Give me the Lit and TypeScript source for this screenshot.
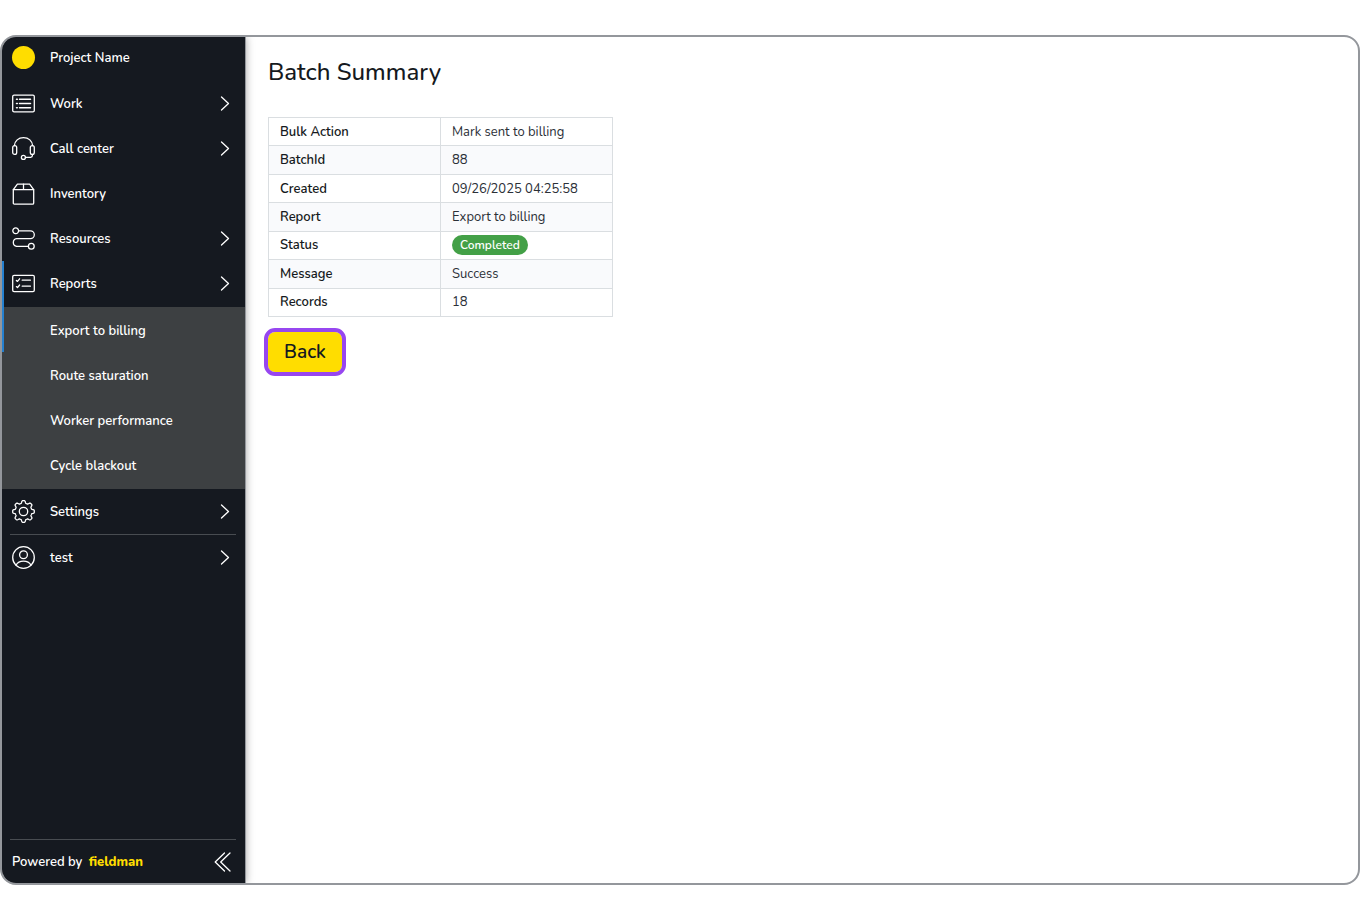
import { LitElement, html, svg, css, nothing, type TemplateResult } from "lit";
import { customElement, state } from "lit/decorators.js";

/* Outline of an eight-toothed gear with soft shoulders. */
function gearPath(cx: number, cy: number): string {
  const steps = 128;
  const points: string[] = [];
  for (let i = 0; i < steps; i++) {
    const a = (i / steps) * Math.PI * 2;
    const wave = Math.max(-1, Math.min(1, Math.cos(8 * a) * 1.9));
    const r = 9.6 + wave * 1.2;
    points.push(`${(cx + r * Math.sin(a)).toFixed(2)} ${(cy - r * Math.cos(a)).toFixed(2)}`);
  }
  return `M${points.join("L")}Z`;
}

const icons: Record<string, TemplateResult> = {
  work: svg`
    <rect x="0.7" y="3.2" width="21.6" height="16.6" rx="1.4" />
    <path d="M7.5 7.3H18.5M7.5 11.5H18.5M7.5 15.7H18.5" stroke-width="1.5" />
    <path d="M4.5 7.3H5.3M4.5 11.5H5.3M4.5 15.7H5.3" stroke-width="1.5" />`,
  call: svg`
    <rect x="0.7" y="8.6" width="4" height="8.8" rx="1.9" />
    <rect x="18.3" y="8.6" width="4" height="8.8" rx="1.9" />
    <path d="M2.4 8.6C2.7 4 6.4 0.6 11.5 0.6S20.3 4 20.6 8.6" />
    <path d="M20.4 17.4V18.6Q20.4 20.4 18.6 20.4H13.5" />
    <circle cx="11.4" cy="20.4" r="2" />`,
  inventory: svg`
    <path d="M1.3 7.6L5.4 2.2H17.6L21.7 7.6V21Q21.7 22.2 20.5 22.2H2.5Q1.3 22.2 1.3 21Z" />
    <path d="M1.3 7.6H21.7M11.5 2.2V7.6" />`,
  resources: svg`
    <circle cx="3.7" cy="3.8" r="2.9" />
    <circle cx="19.3" cy="19.3" r="2.9" />
    <path d="M6.6 3.8H18.4A3.9 3.9 0 0 1 18.4 11.6H4.6A3.9 3.9 0 0 0 4.6 19.3H16.4" />`,
  reports: svg`
    <rect x="0.7" y="3.3" width="21.6" height="16.4" rx="1.4" />
    <path d="M10.2 8.2H18.4M10.2 14.2H18.4M4.4 8.4L5.5 9.4L7.6 6.8M4.4 14.6L5.5 15.6L7.6 13" />`,
  settings: svg`
    <path d=${gearPath(11.5, 11.5)} />
    <circle cx="11.5" cy="11.5" r="4.2" />`,
  user: svg`
    <circle cx="11.5" cy="11.5" r="10.8" />
    <circle cx="11.5" cy="8.7" r="3.9" />
    <path d="M4 19.2C5.4 16.6 8.2 15.2 11.5 15.2S17.6 16.6 19 19.2" />`,
};

const icon = (name: string) => html`
  <svg class="icon" viewBox="0 0 23 23" aria-hidden="true">${icons[name]}</svg>
`;

const chevron = html`
  <svg class="chevron" viewBox="0 0 10 15" aria-hidden="true"><path d="M1.5 1L8.5 7.5L1.5 14" /></svg>
`;

@customElement("side-nav")
export class SideNav extends LitElement {
  @state() private reportsOpen = true;

  private reports = ["Export to billing", "Route saturation", "Worker performance", "Cycle blackout"];

  static styles = css`
    :host {
      display: flex;
      flex-direction: column;
      background: #151920;
      color: #ffffff;
      font-size: 13px;
      font-weight: 600;
      line-height: 20px;
    }
    nav {
      flex: 1;
    }
    ul {
      list-style: none;
      margin: 0;
      padding: 0;
    }
    .menu {
      padding-top: 1px;
    }
    .row {
      box-sizing: border-box;
      display: flex;
      align-items: center;
      gap: 15px;
      width: 100%;
      height: 45px;
      padding: 0 15px 0 10px;
      border: 0;
      background: none;
      color: inherit;
      font: inherit;
      text-align: left;
      text-decoration: none;
      cursor: pointer;
    }
    .label {
      flex: 1;
    }
    .project {
      height: 43px;
      padding-bottom: 2px;
    }
    .dot {
      width: 23px;
      height: 23px;
      border-radius: 50%;
      background: #ffdd00;
    }
    .icon {
      width: 23px;
      height: 23px;
    }
    svg {
      flex: none;
      overflow: visible;
      fill: none;
      stroke: #ffffff;
      stroke-width: 1.3;
      stroke-linecap: round;
      stroke-linejoin: round;
    }
    .chevron {
      width: 10px;
      height: 15px;
    }
    .active {
      position: relative;
    }
    .active::before {
      content: "";
      position: absolute;
      z-index: 1;
      top: 0;
      left: 0;
      width: 2px;
      height: 91px;
      background: #2581d0;
    }
    .submenu {
      margin-top: 1px;
      padding: 1px 0;
      background: #3d4042;
    }
    .submenu .row {
      padding-left: 48px;
    }
    .line {
      height: 1px;
      margin: 0 9px 0 8px;
      border: 0;
      background: #484c51;
    }
    .footer {
      display: flex;
      align-items: center;
      justify-content: space-between;
      height: 43px;
      padding: 0 14px 0 10px;
    }
    .brand {
      margin-left: 3px;
      color: #ffdd00;
      font-weight: 800;
      text-decoration: none;
    }
    .collapse {
      display: flex;
      padding: 0;
      border: 0;
      background: none;
      cursor: pointer;
    }
    .collapse svg {
      width: 17px;
      height: 20px;
    }
  `;

  private item(name: string, label: string) {
    return html`<button class="row" type="button">${icon(name)}<span class="label">${label}</span>${chevron}</button>`;
  }

  render() {
    return html`
      <nav aria-label="Main">
        <a class="row project" href="#"><span class="dot"></span><span class="label">Project Name</span></a>
        <ul class="menu">
          <li>${this.item("work", "Work")}</li>
          <li>${this.item("call", "Call center")}</li>
          <li><a class="row" href="#inventory">${icon("inventory")}<span class="label">Inventory</span></a></li>
          <li>${this.item("resources", "Resources")}</li>
          <li class="active">
            <button
              class="row"
              type="button"
              aria-expanded=${this.reportsOpen}
              @click=${() => (this.reportsOpen = !this.reportsOpen)}
            >
              ${icon("reports")}<span class="label">Reports</span>${chevron}
            </button>
            ${this.reportsOpen
              ? html`<ul class="submenu">
                  ${this.reports.map((r) => html`<li><a class="row" href="#reports">${r}</a></li>`)}
                </ul>`
              : nothing}
          </li>
          <li>${this.item("settings", "Settings")}</li>
        </ul>
        <hr class="line" />
        ${this.item("user", "test")}
      </nav>
      <hr class="line" />
      <div class="footer">
        <span>Powered by <a class="brand" href="#about">fieldman</a></span>
        <button class="collapse" type="button" aria-label="Collapse menu">
          <svg viewBox="0 0 17 20" aria-hidden="true"><path d="M10.5 1L1.2 10L10.5 19M16 1L6.7 10L16 19" /></svg>
        </button>
      </div>
    `;
  }
}

@customElement("batch-summary")
export class BatchSummary extends LitElement {
  private rows: [string, string | TemplateResult][] = [
    ["Bulk Action", "Mark sent to billing"],
    ["BatchId", "88"],
    ["Created", "09/26/2025 04:25:58"],
    ["Report", "Export to billing"],
    ["Status", html`<span class="badge">Completed</span>`],
    ["Message", "Success"],
    ["Records", "18"],
  ];

  static styles = css`
    :host {
      display: block;
      padding: 19px 22px;
      color: #151920;
    }
    h1 {
      margin: 0 0 29px;
      font-size: 24px;
      font-weight: 500;
      line-height: 32px;
    }
    table {
      width: 345px;
      height: 200px;
      table-layout: fixed;
      border-collapse: collapse;
      font-size: 13px;
      line-height: 20px;
    }
    th,
    td {
      padding: 0 11px;
      border: 1px solid #dadee1;
      text-align: left;
    }
    th {
      font-weight: 600;
    }
    td {
      color: #2b3037;
      font-weight: 400;
    }
    tr:nth-child(even) {
      background: #f9fafc;
    }
    .badge {
      display: inline-block;
      padding: 0 8px;
      border-radius: 10px;
      background: #43a047;
      color: #ffffff;
      font-size: 12px;
      font-weight: 600;
    }
    .back {
      display: block;
      height: 40px;
      margin: 15px 0 0;
      padding: 0 16px;
      border: 0;
      border-radius: 7px;
      outline: 4px solid #9747f0;
      background: #ffdd00;
      color: #151920;
      font-family: inherit;
      font-size: 19px;
      font-weight: 600;
      line-height: 28px;
      cursor: pointer;
    }
  `;

  render() {
    return html`
      <h1>Batch Summary</h1>
      <table>
        <tbody>
          ${this.rows.map(([name, value]) => html`<tr><th scope="row">${name}</th><td>${value}</td></tr>`)}
        </tbody>
      </table>
      <button class="back" type="button">Back</button>
    `;
  }
}

@customElement("app-root")
export class AppRoot extends LitElement {
  static styles = css`
    :host {
      box-sizing: border-box;
      display: flex;
      min-height: 100vh;
      padding: 35px 0;
      background: #ffffff;
      font-family: Nunito, Lato, sans-serif;
    }
    .frame {
      flex: 1;
      display: flex;
      overflow: hidden;
      border: 2px solid #94979c;
      border-radius: 16px;
    }
    side-nav {
      flex: none;
      width: 243px;
      border-right: 1px solid #94979c;
      box-shadow: 0 0 8px rgba(0, 0, 0, 0.35);
    }
    main {
      flex: 1;
      min-width: 0;
    }
  `;

  render() {
    return html`
      <div class="frame">
        <side-nav></side-nav>
        <main><batch-summary></batch-summary></main>
      </div>
    `;
  }
}
